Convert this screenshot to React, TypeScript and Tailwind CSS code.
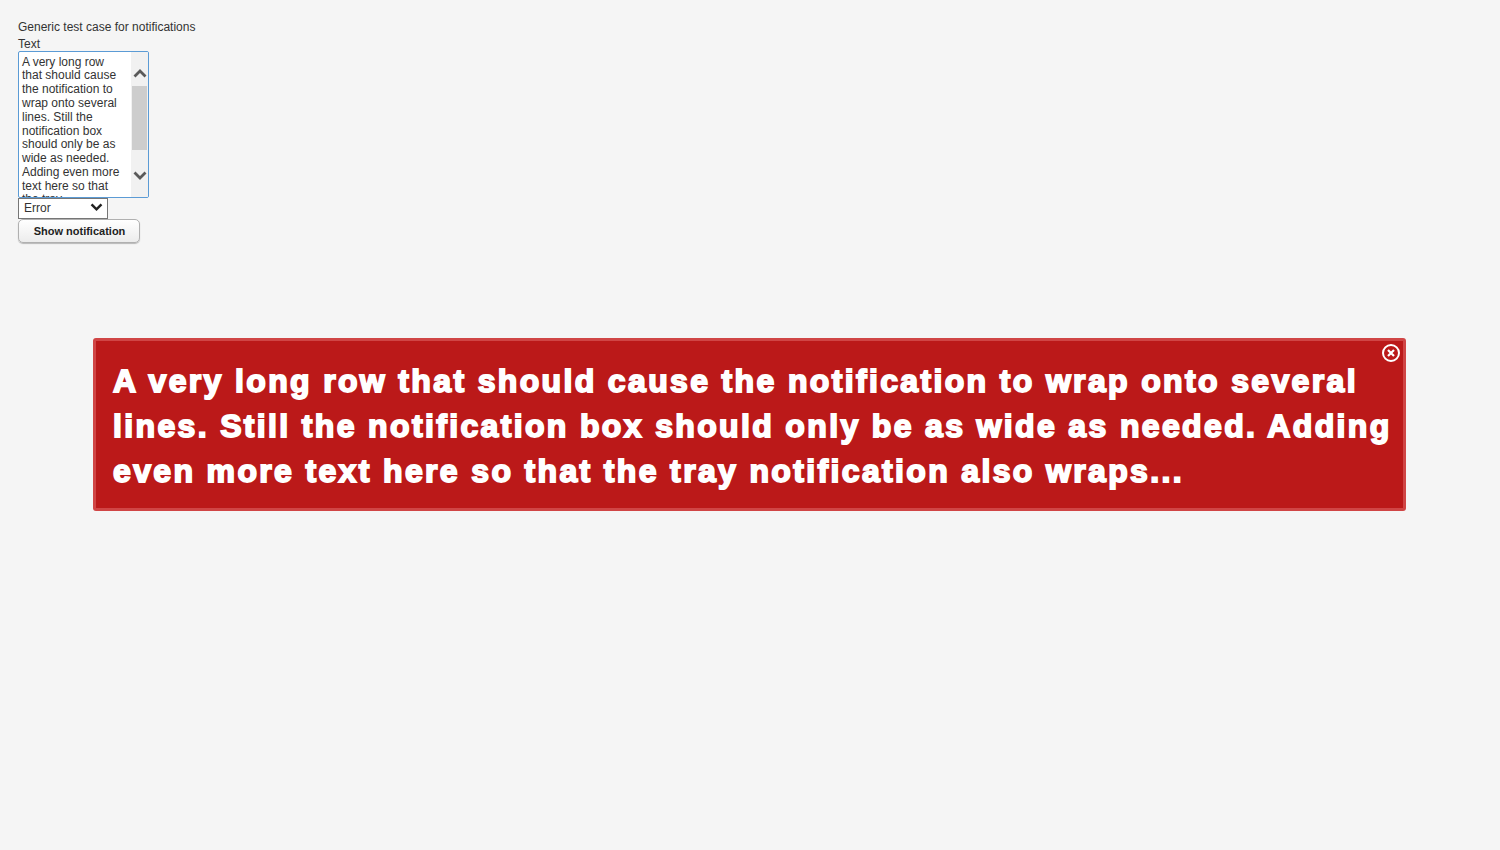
import React from "react";

const sans = { fontFamily: '"Liberation Sans", Arial, sans-serif' };

const message =
  "A very long row that should cause the notification to wrap onto several lines. Still the notification box should only be as wide as needed. Adding even more text here so that the tray notification also wraps...";

function Chevron({ up, className }: { up?: boolean; className: string }) {
  return (
    <svg viewBox="0 0 14 10" className={className} fill="none" stroke="currentColor" strokeWidth="2.8">
      <path d={up ? "M1.5 8.5 L7 3 L12.5 8.5" : "M1.5 1.5 L7 7 L12.5 1.5"} />
    </svg>
  );
}

export default function App() {
  return (
    <div style={sans} className="relative min-h-[850px] w-full overflow-hidden bg-[#f5f5f5] pl-[18px] pt-[19px] text-[12px] text-[#333333]">
      <div className="h-[17px] leading-[17px]">Generic test case for notifications</div>
      <div className="h-[15px] pt-[1px] leading-[15px]">Text</div>
      <div className="flex h-[147px] w-[131px] overflow-hidden rounded-[2px] border border-[#5b9bd5] bg-white">
        <div className="h-full w-[112px] overflow-hidden pl-[3px] pr-[9px] pt-[3.7px] text-[12px] leading-[13.77px] text-[#333333]">
          {message}
        </div>
        <div className="flex h-full w-[17px] flex-col items-center bg-[#f1f1f1]">
          <div className="flex h-[34px] w-full shrink-0 items-center justify-center pt-[7px] text-[#5a5a5a]">
            <Chevron up className="h-[10px] w-[14px]" />
          </div>
          <div className="h-[64px] w-[15px] shrink-0 bg-[#cdcdcd]" />
          <div className="flex h-[47px] w-full shrink-0 items-start justify-center pt-[21px] text-[#5a5a5a]">
            <Chevron className="h-[10px] w-[14px]" />
          </div>
        </div>
      </div>
      <div className="flex h-[21px] w-[90px] items-center justify-between border border-[#767676] bg-white pb-[2px] pl-[5px] pr-[4px] text-[12px] text-[#333333]">
        <span>Error</span>
        <Chevron className="h-[9px] w-[13px] text-[#222222]" />
      </div>
      <button className="block h-[24px] w-[122px] rounded-[5px] border border-[#b0b0b0] bg-gradient-to-b from-white to-[#ececec] pl-[1px] text-center text-[11px] font-bold text-[#222222] shadow-[0_1px_1px_rgba(0,0,0,0.25)]">
        Show notification
      </button>

      <div className="absolute left-[93px] top-[338px] h-[173px] w-[1313px] rounded-[3px] border-[3px] border-[#d04545] bg-[#bb1919] pl-[17px] pr-[5px] pt-[18px]">
        <div className="text-[32px] font-bold leading-[45px] tracking-[2.35px] text-white [-webkit-text-stroke:1.8px_white]">
          {message}
        </div>
        <svg viewBox="0 0 18 18" className="absolute right-[3px] top-[3px] h-[18px] w-[18px]" fill="none" stroke="white">
          <circle cx="9" cy="9" r="8" strokeWidth="2" />
          <path d="M6 6 L12 12 M12 6 L6 12" strokeWidth="2.2" />
        </svg>
      </div>
    </div>
  );
}
